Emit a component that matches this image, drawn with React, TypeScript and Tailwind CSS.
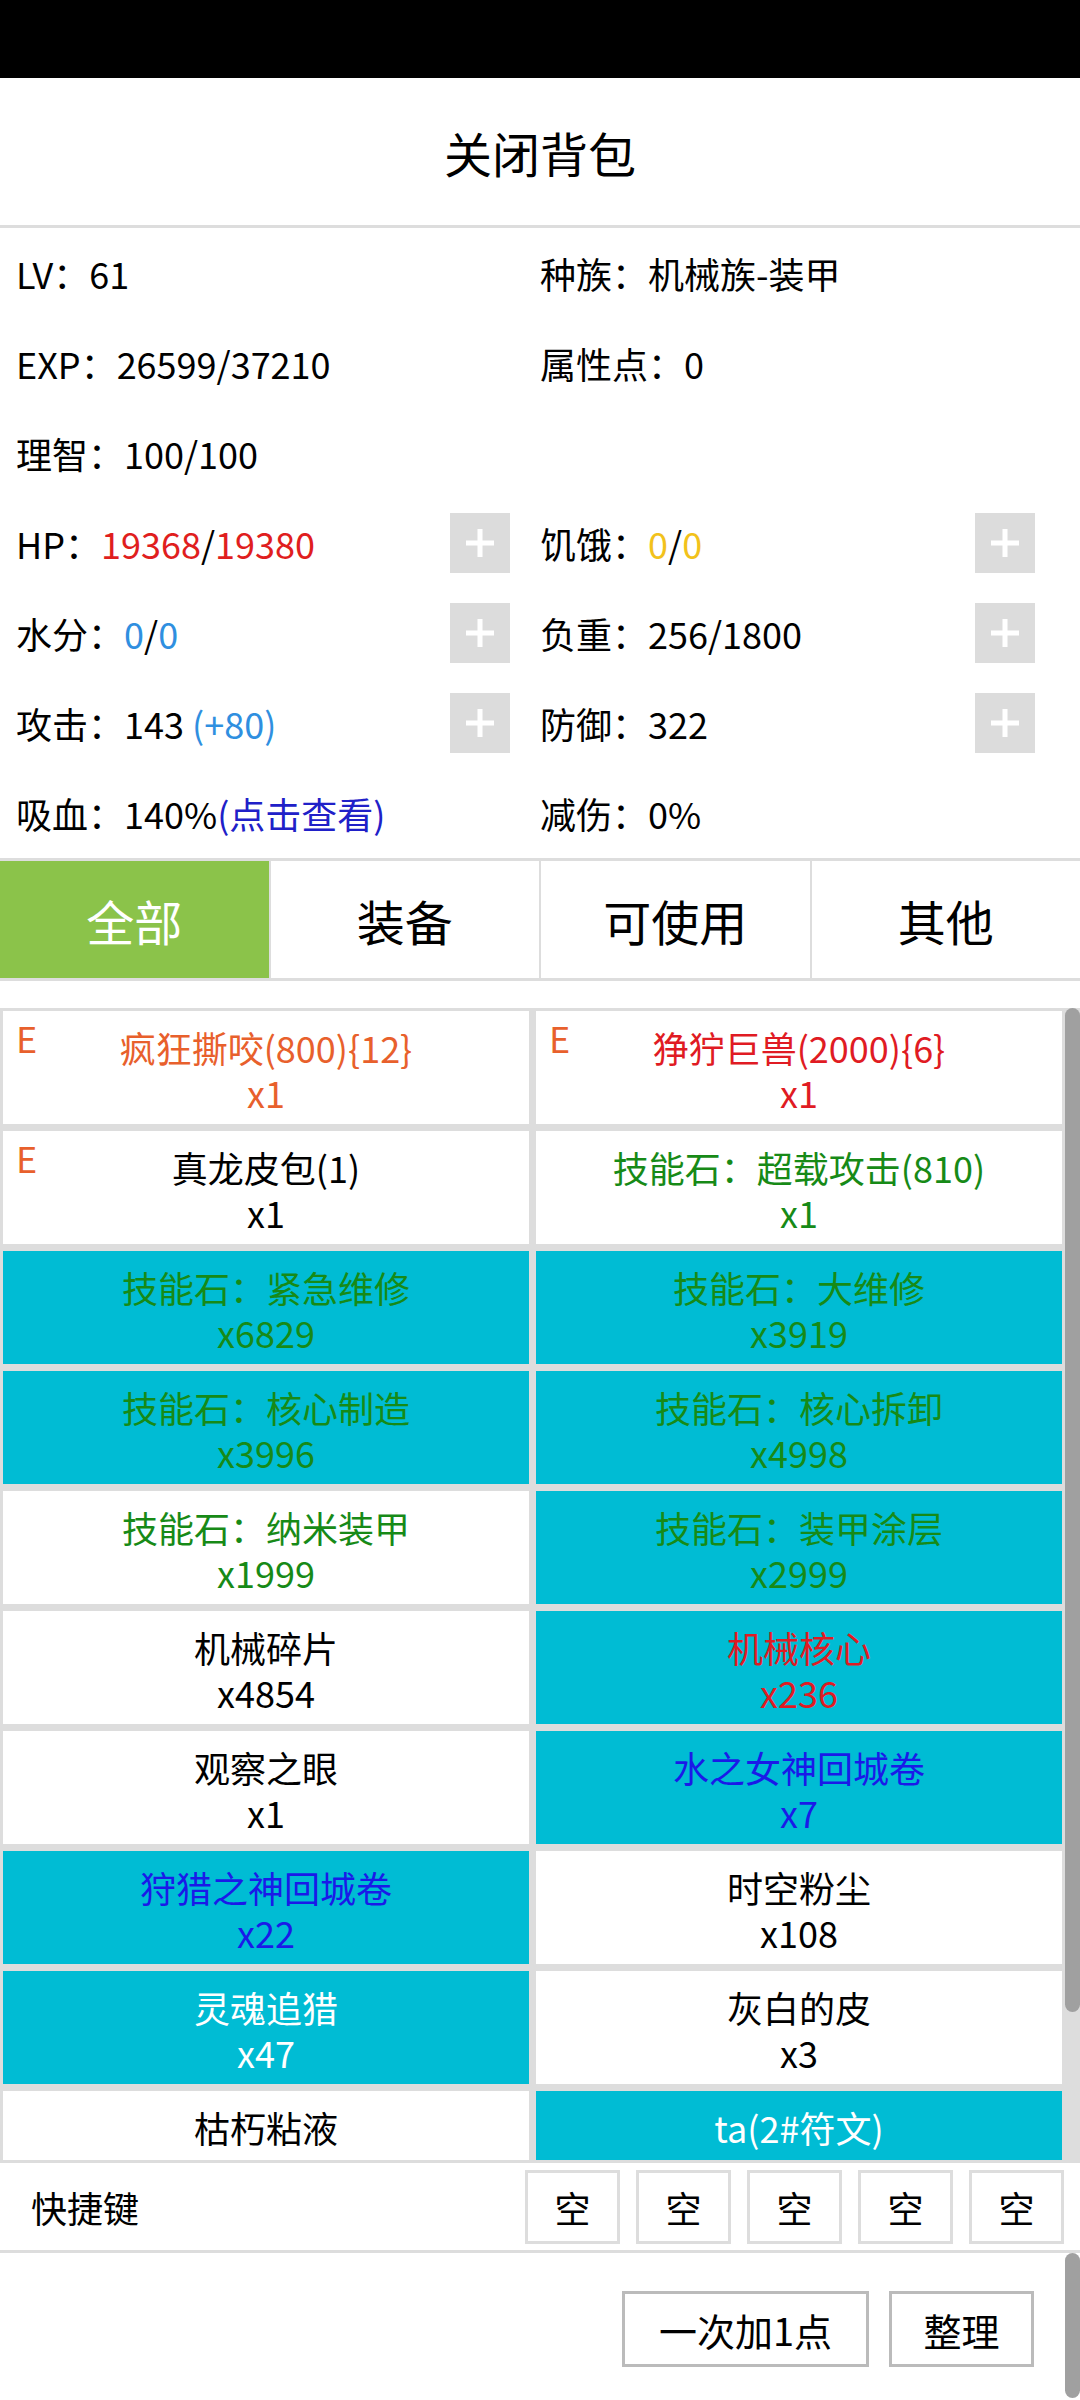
import { ReactNode } from "react";

const FONT = "font-['Noto_Sans_CJK_SC','Noto_Sans',sans-serif]";

type Item = {
  name: string;
  count?: string;
  color: string;
  cyan?: boolean;
  equip?: boolean;
};

const items: Item[] = [
  { name: "疯狂撕咬(800){12}", count: "x1", color: "text-[#e8602c]", equip: true },
  { name: "狰狞巨兽(2000){6}", count: "x1", color: "text-[#e01b23]", equip: true },
  { name: "真龙皮包(1)", count: "x1", color: "text-black", equip: true },
  { name: "技能石：超载攻击(810)", count: "x1", color: "text-[#178a17]" },
  { name: "技能石：紧急维修", count: "x6829", color: "text-[#178a17]", cyan: true },
  { name: "技能石：大维修", count: "x3919", color: "text-[#178a17]", cyan: true },
  { name: "技能石：核心制造", count: "x3996", color: "text-[#178a17]", cyan: true },
  { name: "技能石：核心拆卸", count: "x4998", color: "text-[#178a17]", cyan: true },
  { name: "技能石：纳米装甲", count: "x1999", color: "text-[#178a17]" },
  { name: "技能石：装甲涂层", count: "x2999", color: "text-[#178a17]", cyan: true },
  { name: "机械碎片", count: "x4854", color: "text-black" },
  { name: "机械核心", count: "x236", color: "text-[#e01b23]", cyan: true },
  { name: "观察之眼", count: "x1", color: "text-black" },
  { name: "水之女神回城卷", count: "x7", color: "text-[#1a1ae8]", cyan: true },
  { name: "狩猎之神回城卷", count: "x22", color: "text-[#1a1ae8]", cyan: true },
  { name: "时空粉尘", count: "x108", color: "text-black" },
  { name: "灵魂追猎", count: "x47", color: "text-white", cyan: true },
  { name: "灰白的皮", count: "x3", color: "text-black" },
  // last row is cut off by the scroll area, only names show
  { name: "枯朽粘液", color: "text-black" },
  { name: "ta(2#符文)", color: "text-white", cyan: true },
];

function PlusButton() {
  return (
    <div className="w-[60px] h-[60px] bg-[#dcdcdc] flex items-center justify-center shrink-0">
      <svg width="30" height="30" viewBox="0 0 30 30">
        <rect x="12.5" y="1" width="5" height="28" fill="#fff" />
        <rect x="1" y="12.5" width="28" height="5" fill="#fff" />
      </svg>
    </div>
  );
}

function Stat({ label, children, plus, right }: { label: string; children?: ReactNode; plus?: boolean; right?: boolean }) {
  return (
    <div className={`h-[90px] flex items-center ${right ? "pr-[45px]" : "pl-[16px] pr-[30px]"}`}>
      <div className="flex-1 whitespace-nowrap">
        {label}：{children}
      </div>
      {plus && <PlusButton />}
    </div>
  );
}

function Cell({ item }: { item: Item }) {
  return (
    <div
      className={`relative h-[113px] pt-[14px] flex flex-col items-center leading-[45px] ${
        item.cyan ? "bg-[#00bcd4]" : "bg-white"
      } ${item.color}`}
    >
      {item.equip && <span className="absolute left-[13px] top-[4px] text-[#e8602c]">E</span>}
      <div className="whitespace-nowrap">{item.name}</div>
      {item.count && <div>{item.count}</div>}
    </div>
  );
}

export default function App() {
  const tabs = ["全部", "装备", "可使用", "其他"];
  return (
    <div className={`w-[1080px] h-[2400px] overflow-hidden bg-white flex flex-col text-[36px] text-black ${FONT}`}>
      <div className="h-[78px] bg-black shrink-0" />
      <div className="h-[147px] flex items-center justify-center text-[48px] shrink-0">关闭背包</div>
      <div className="h-[3px] bg-[#dddddd] shrink-0" />

      {/* stats */}
      <div className="grid grid-cols-2 shrink-0">
        <Stat label="LV">61</Stat>
        <Stat label="种族" right>机械族-装甲</Stat>
        <Stat label="EXP">26599/37210</Stat>
        <Stat label="属性点" right>0</Stat>
        <Stat label="理智">100/100</Stat>
        <div />
        <Stat label="HP" plus>
          <span className="text-[#e01e1e]">19368</span>/<span className="text-[#e01e1e]">19380</span>
        </Stat>
        <Stat label="饥饿" plus right>
          <span className="text-[#f2c21b]">0</span>/<span className="text-[#f2c21b]">0</span>
        </Stat>
        <Stat label="水分" plus>
          <span className="text-[#2f8fe0]">0</span>/<span className="text-[#2f8fe0]">0</span>
        </Stat>
        <Stat label="负重" plus right>256/1800</Stat>
        <Stat label="攻击" plus>
          143 <span className="text-[#2f8fe0]">(+80)</span>
        </Stat>
        <Stat label="防御" plus right>322</Stat>
        <Stat label="吸血">
          140%<span className="text-[#2020c8]">(点击查看)</span>
        </Stat>
        <Stat label="减伤" right>0%</Stat>
      </div>

      {/* tabs */}
      <div className="h-[123px] border-y-[3px] border-[#dddddd] flex shrink-0 text-[48px]">
        {tabs.map((t, i) => (
          <div
            key={t}
            className={`flex-1 flex items-center justify-center ${i > 0 ? "border-l-2 border-[#dddddd]" : ""} ${
              i === 0 ? "bg-[#8bc34a] text-white" : "bg-white"
            }`}
          >
            {t}
          </div>
        ))}
      </div>

      <div className="h-[27px] shrink-0" />

      {/* item grid */}
      <div className="h-[1152px] shrink-0 flex bg-[#dddddd] overflow-hidden">
        <div className="flex-1 pl-[3px] pt-[3px] grid grid-cols-2 gap-[7px] content-start">
          {items.map((it) => (
            <Cell key={it.name} item={it} />
          ))}
        </div>
        <div className="w-[18px] pl-[3px]">
          <div className="w-[15px] h-[1004px] rounded-full bg-[#a0a0a0]" />
        </div>
      </div>

      <div className="h-[3px] bg-[#dddddd] shrink-0" />

      {/* quick keys */}
      <div className="h-[87px] flex items-center shrink-0 pl-[31px] pr-[16px]">
        <div className="flex-1">快捷键</div>
        <div className="flex gap-[16px]">
          {[0, 1, 2, 3, 4].map((k) => (
            <div key={k} className="w-[95px] h-[74px] border-[3px] border-[#dddddd] flex items-center justify-center">
              空
            </div>
          ))}
        </div>
      </div>

      <div className="h-[3px] bg-[#dddddd] shrink-0" />

      {/* bottom actions */}
      <div className="flex-1 flex">
        <div className="flex-1 flex justify-end items-start pt-[38px] pr-[31px] gap-[20px] text-[38px]">
          <div className="w-[247px] h-[76px] border-[3px] border-[#bbbbbb] flex items-center justify-center">一次加1点</div>
          <div className="w-[145px] h-[76px] border-[3px] border-[#bbbbbb] flex items-center justify-center">整理</div>
        </div>
        <div className="w-[15px] mb-[2px] rounded-full bg-[#a0a0a0]" />
      </div>
    </div>
  );
}
